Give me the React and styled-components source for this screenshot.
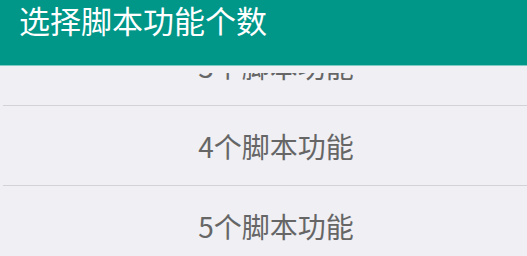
import styled, { createGlobalStyle } from 'styled-components';

const GlobalStyle = createGlobalStyle`
  html, body {
    margin: 0;
    padding: 0;
    background: #efeff4;
  }
  body {
    font-family: "Noto Sans CJK SC", "Noto Sans", sans-serif;
  }
`;

const Screen = styled.div`
  width: 527px;
  height: 256px;
  display: flex;
  flex-direction: column;
  overflow: hidden;
  background: #efeff4;
`;

const Header = styled.div`
  height: 66px;
  flex-shrink: 0;
  background: #009688;
  border-bottom: 1px solid #80cbc4;
  box-sizing: border-box;
  display: flex;
  align-items: flex-start;
  padding: 0 0 0 19px;
`;

const Title = styled.h1`
  margin: 0;
  font-size: 31px;
  line-height: 40px;
  font-weight: 400;
  color: #ffffff;
`;

const Viewport = styled.div`
  flex: 1;
  overflow: hidden;
  margin-top: 7px;
`;

const List = styled.div`
  display: flex;
  flex-direction: column;
  margin-top: ${({ $offset }) => $offset}px;
`;

const Item = styled.div`
  height: 79px;
  display: flex;
  align-items: center;
  justify-content: center;
  font-size: 28px;
  color: #666666;
  border-bottom: 1px solid #d3d3d7;
  margin-left: 3px;
  padding-left: 22px;
`;

const counts = [3, 4, 5, 6];

const App = () => {
  return (
    <>
      <GlobalStyle />
      <Screen>
        <Header>
          <Title>选择脚本功能个数</Title>
        </Header>
        <Viewport>
          <List $offset={-47}>
            {counts.map((n) => (
              <Item key={n}>{n}个脚本功能</Item>
            ))}
          </List>
        </Viewport>
      </Screen>
    </>
  );
};

export default App;
